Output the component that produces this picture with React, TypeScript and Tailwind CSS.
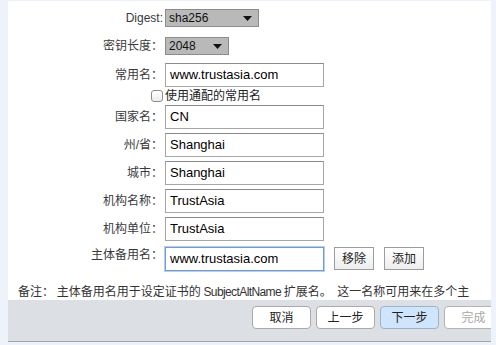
import React from "react";

const font = { fontFamily: '"Liberation Sans", "Noto Sans CJK SC", sans-serif' };

function Label({ children }: { children: React.ReactNode }) {
  return (
    <div className="w-[155px] shrink-0 text-right text-[12px] leading-[16px] text-[#3a3a3a]">
      {children}
    </div>
  );
}

function Select({ value, width }: { value: string; width: string }) {
  return (
    <div
      className={`ml-[2px] h-[18px] ${width} flex items-center justify-between border border-[#8c8c8c] bg-[#b9b9b9] pl-[3px] pr-[6px] text-[12px] leading-none text-[#111]`}
    >
      <span>{value}</span>
      <svg width="9" height="5" viewBox="0 0 9 5">
        <polygon points="0,0 9,0 4.5,5" fill="#111" />
      </svg>
    </div>
  );
}

function Input({ value, focused = false }: { value: string; focused?: boolean }) {
  return (
    <div
      className={`ml-[2px] h-[24px] w-[159px] flex items-center pl-[4px] text-[13px] text-black ${
        focused
          ? "border border-[#6f9bd6] shadow-[0_0_0_1px_#b4cff0]"
          : "border border-[#a6a6a6] border-t-[#8a8a8a]"
      }`}
    >
      {value}
    </div>
  );
}

function Row({ label, value, mt, focused }: { label: string; value: string; mt: string; focused?: boolean }) {
  return (
    <div className={`flex items-center ${mt}`}>
      <Label>{label}</Label>
      <Input value={value} focused={focused} />
    </div>
  );
}

function FooterBtn({ children, primary = false, disabled = false }: { children: React.ReactNode; primary?: boolean; disabled?: boolean }) {
  return (
    <div
      className={`h-[23px] w-[59px] shrink-0 flex items-center justify-center rounded-[4px] border text-[12px] ${
        primary
          ? "border-[#9ab3cc] bg-[#cfe5fb] text-[#222]"
          : disabled
          ? "border-[#b3b3b3] bg-white text-[#a8a8a8]"
          : "border-[#a9a9a9] bg-white text-[#222]"
      }`}
    >
      {children}
    </div>
  );
}

export default function App() {
  return (
    <div className="h-[345px] w-[496px] bg-[#eef2fa] pl-[8px] pr-[5px] pt-[1px] overflow-hidden" style={font}>
      <div className="flex flex-col bg-white">
        <div className="h-[299px] overflow-hidden pt-[8px] flex flex-col">
          <div className="flex items-center">
            <Label>Digest:</Label>
            <Select value="sha256" width="w-[94px]" />
          </div>
          <div className="flex items-center mt-[10px]">
            <Label>密钥长度：</Label>
            <Select value="2048" width="w-[64px]" />
          </div>
          <Row label="常用名：" value="www.trustasia.com" mt="mt-[8px]" />
          <div className="flex items-center h-[23px]">
            <div className="w-[143px] shrink-0" />
            <span className="h-[12px] w-[12px] rounded-[3px] border border-[#8d8d8d] bg-gradient-to-b from-white to-[#ececec]" />
            <span className="ml-[2px] text-[12px] leading-[16px] text-[#222]">使用通配的常用名</span>
          </div>
          <Row label="国家名：" value="CN" mt="mt-0" />
          <Row label="州/省：" value="Shanghai" mt="mt-[4px]" />
          <Row label="城市：" value="Shanghai" mt="mt-[4px]" />
          <Row label="机构名称：" value="TrustAsia" mt="mt-[4px]" />
          <Row label="机构单位：" value="TrustAsia" mt="mt-[4px]" />
          <div className="flex items-start mt-[6px]">
            <div className="w-[155px] shrink-0 text-right text-[12px] leading-[16px] text-[#3a3a3a]">主体备用名：</div>
            <Input value="www.trustasia.com" focused />
            <div className="ml-[10px] h-[23px] w-[40px] flex items-center justify-center border border-[#9c9c9c] bg-gradient-to-b from-white to-[#ededed] text-[12px] text-[#222]">
              移除
            </div>
            <div className="ml-[10px] h-[23px] w-[40px] flex items-center justify-center border border-[#9c9c9c] bg-gradient-to-b from-white to-[#ededed] text-[12px] text-[#222]">
              添加
            </div>
          </div>
          <div
            className="mt-[12px] pl-[10px] whitespace-nowrap text-[12px] leading-[16px] text-[#333]"
            style={{ fontFamily: '"Noto Sans CJK SC", "Liberation Sans", sans-serif' }}
          >
            备注：&nbsp;主体备用名用于设定证书的{" "}
            <span className="text-[12px] tracking-[-0.6px]" style={{ fontFamily: '"Liberation Sans", sans-serif' }}>
              SubjectAltName
            </span>{" "}
            扩展名。&nbsp;&nbsp;这一名称可用来在多个主
          </div>
        </div>
        <div className="h-[42px] bg-[#dcdfe4] border-b border-[#a3a5a8] flex items-start pt-[6px] pl-[244px] gap-[5px] overflow-hidden">
          <FooterBtn>取消</FooterBtn>
          <FooterBtn>上一步</FooterBtn>
          <FooterBtn primary>下一步</FooterBtn>
          <FooterBtn disabled>完成</FooterBtn>
        </div>
      </div>
    </div>
  );
}
